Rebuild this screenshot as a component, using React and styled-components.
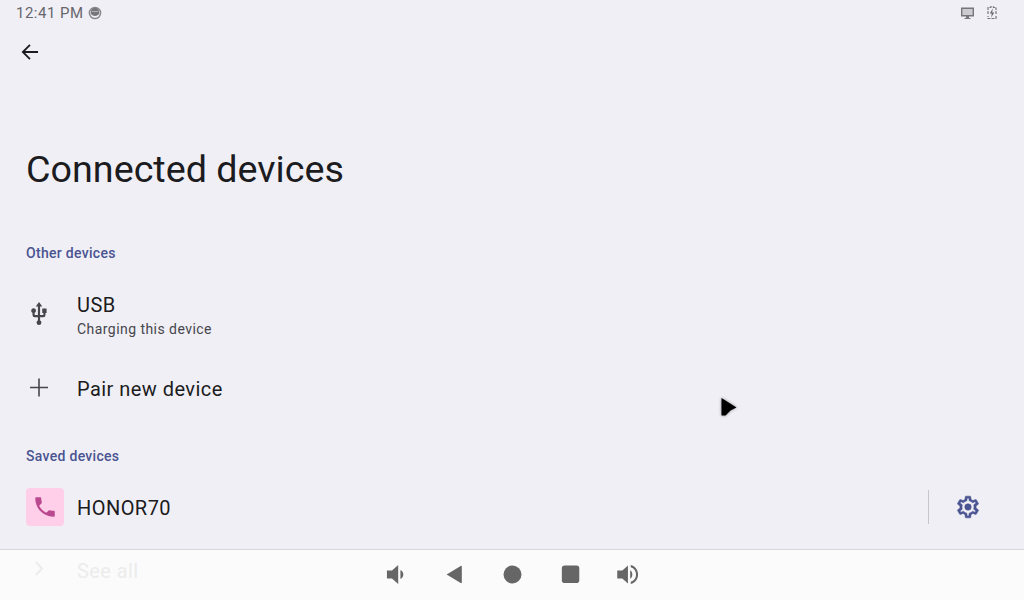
import React from "react";
import styled, { createGlobalStyle } from "styled-components";

const Global = createGlobalStyle`
  html, body { margin: 0; padding: 0; width: 1024px; height: 600px; overflow: hidden; background: #f0eff6; }
  * { box-sizing: border-box; }
`;
const Screen = styled.div`
  width: 1024px; height: 600px; position: relative; overflow: hidden;
  background: #f0eff6; font-family: Roboto, "Liberation Sans", sans-serif; color: #1b1b20;
  display: flex; flex-direction: column;
`;
const StatusBar = styled.div`
  height: 26px; flex: none; display: flex; align-items: center; justify-content: space-between;
  padding: 0 27px 0 16px; color: #66666b;
`;
const StatusGroup = styled.div`display: flex; align-items: center; gap: ${p => p.$gap || 4}px;`;
const Clock = styled.span`font-size: 15px; letter-spacing: 0.5px; line-height: 26px;`;
const BackButton = styled.div`height: 52px; flex: none; padding: 16px 0 0 20px; color: #1b1b20;`;
const Title = styled.h1`
  margin: 69px 0 0 26px; font-weight: 400; font-size: 37.7px; line-height: 44px; height: 44px; color: #1b1b20;
`;
const SectionLabel = styled.div`
  margin: ${p => p.$top}px 0 0 26px; font-size: 14px; font-weight: 500; letter-spacing: 0.3px; line-height: 20px; height: 20px; color: #4a5491;
`;
const Row = styled.div`
  display: flex; align-items: center; height: ${p => p.$h}px; margin-top: ${p => p.$top || 0}px; padding-left: 26px; position: relative;
`;
const IconSlot = styled.div`width: 51px; flex: none; display: flex; align-items: center; padding-bottom: ${p => p.$lift || 0}px; color: #46464c;`;
const RowText = styled.div`display: flex; flex-direction: column; flex: 1; padding-top: ${p => p.$drop || 0}px;`;
const RowTitle = styled.div`font-size: 20px; line-height: 26px; color: #1b1b20; letter-spacing: 0.45px;`;
const RowSub = styled.div`font-size: 14px; line-height: 20px; padding-top: 1px; color: #46464c; letter-spacing: 0.45px;`;
const PhoneTile = styled.div`
  width: 38px; height: 38px; border-radius: 4px; background: #ffcfe9; display: flex; align-items: center; justify-content: center;
`;
const Divider = styled.div`width: 1px; height: 34px; background: #c7c6ce;`;
const Gear = styled.div`width: 95px; flex: none; padding-left: 26px; display: flex; align-items: center;`;
const NavBar = styled.div`
  position: absolute; left: 0; right: 0; bottom: 0; height: 51px; background: #fbfbfb; border-top: 1px solid #d8d8da;
  display: flex; align-items: center; justify-content: center; gap: 31px; padding: 0 0 2px 1px; color: #666;
`;
const NavIcon = styled.div`width: 27px; height: 27px; display: flex; align-items: center; justify-content: center;`;
const Faded = styled.div`
  position: absolute; left: 0; bottom: 0; height: 51px; padding: 0 0 12px 34px; display: flex; align-items: center;
  color: #ececed; font-size: 20px; letter-spacing: 0.4px;
`;
const FadedLabel = styled.span`margin-left: 32px; padding-top: 4px;`;
const Pointer = styled.svg`position: absolute; left: 718px; top: 396px; filter: drop-shadow(0 0 1.5px rgba(0,0,0,.45));`;

const Nav = ({ children }) => <NavIcon><svg width="27" height="27" viewBox="0 0 24 24" fill="currentColor">{children}</svg></NavIcon>;

export default function App() {
  return (
    <Screen>
      <Global />
      <StatusBar>
        <StatusGroup>
          <Clock>12:41 PM</Clock>
          <svg width="14" height="14" viewBox="0 0 15 15">
            <circle cx="7.500" cy="7.500" r="6" fill="none" stroke="#8a8a8e" strokeWidth="1.600" />
            <path d="M3 6.500a4.500 4.500 0 0 1 9 0v1.500c-1 3.500-8 3.500-9 0z" fill="#77777b" />
            <path d="M4 5.600h7v.8H4z" fill="#c8c8cc" />
          </svg>
        </StatusGroup>
        <StatusGroup $gap={12}>
          <svg width="15" height="14" viewBox="0 0 15 14" fill="#77777b">
            <path fillRule="evenodd" d="M1 1.500h13v9H9v1.500h1.500v1h-6v-1H6v-1.500H1z M2.500 3v6h10V3z" />
            <rect x="2.500" y="3" width="10" height="6" fill="#77777b" opacity=".3" />
          </svg>
          <svg width="10" height="14" viewBox="0 0 10 14">
            <path d="M1 4V1.500h2.500V.8h3v.7H9V4M9 10v2.500H1V10M1 5v4M9 5v4" stroke="#77777b" strokeWidth="1.200" fill="none" strokeDasharray="3 1" />
            <path d="M5.800 2.500 2.800 7.500h2L4.200 11.500l3-5h-2z" fill="#66666b" />
          </svg>
        </StatusGroup>
      </StatusBar>
      <BackButton>
        <svg width="20" height="20" viewBox="0 0 20 20" fill="none" stroke="#1b1b20" strokeWidth="1.800">
          <path d="M18 10H3M10 2.800 2.800 10l7.200 7.200" />
        </svg>
      </BackButton>
      <Title>Connected devices</Title>
      <SectionLabel $top={52}>Other devices</SectionLabel>
      <Row $h={72} $top={16}>
        <IconSlot $lift={3}>
          <svg width="26" height="26" viewBox="0 0 24 24" fill="currentColor">
            <path d="M15 7v4h1v2h-3V5h2l-3-4-3 4h2v8H8v-2.070c.7-.37 1.200-1.080 1.200-1.930A2.200 2.200 0 0 0 7 6.800 2.200 2.200 0 0 0 4.800 9c0 .85.500 1.560 1.200 1.930V13a2 2 0 0 0 2 2h3v3.050c-.71.370-1.200 1.100-1.200 1.950a2.200 2.200 0 0 0 4.400 0c0-.85-.49-1.580-1.200-1.950V15h3a2 2 0 0 0 2-2v-2h1V7z" />
          </svg>
        </IconSlot>
        <RowText>
          <RowTitle>USB</RowTitle>
          <RowSub>Charging this device</RowSub>
        </RowText>
      </Row>
      <Row $h={76}>
        <IconSlot $lift={2}>
          <svg width="26" height="26" viewBox="0 0 26 26" fill="none" stroke="currentColor" strokeWidth="1.600">
            <path d="M13 3.500v18M4 12.500h18" />
          </svg>
        </IconSlot>
        <RowText><RowTitle>Pair new device</RowTitle></RowText>
      </Row>
      <SectionLabel $top={19}>Saved devices</SectionLabel>
      <Row $h={38} $top={22}>
        <IconSlot>
          <PhoneTile>
            <svg width="26" height="26" viewBox="0 0 24 24" fill="#b9488f">
              <path d="M6.620 10.790c1.440 2.830 3.760 5.140 6.590 6.590l2.200-2.200c.27-.27.670-.36 1.020-.24 1.120.37 2.330.57 3.570.57.550 0 1 .45 1 1V20c0 .55-.45 1-1 1C10.610 21 3 13.390 3 4c0-.55.450-1 1-1h3.500c.55 0 1 .45 1 1 0 1.250.2 2.450.57 3.570.11.350.03.740-.25 1.020z" />
            </svg>
          </PhoneTile>
        </IconSlot>
        <RowText $drop={2}><RowTitle>HONOR70</RowTitle></RowText>
        <Divider />
        <Gear>
          <svg width="26" height="26" viewBox="0 0 24 24" fill="#4a5491" stroke="#4a5491" strokeWidth=".5">
            <path fillRule="evenodd" d="M19.430 12.980c.04-.32.070-.64.070-.98s-.03-.66-.07-.98l2.110-1.650c.19-.15.240-.42.120-.64l-2-3.460c-.12-.22-.39-.3-.61-.22l-2.490 1c-.52-.4-1.080-.73-1.690-.98l-.38-2.650A.49.490 0 0 0 14 2h-4c-.25 0-.46.180-.49.420l-.38 2.650c-.61.250-1.170.59-1.690.98l-2.490-1c-.23-.09-.49 0-.61.220l-2 3.460c-.13.220-.07.490.12.640l2.110 1.650c-.04.320-.07.650-.07.980s.3.660.07.980l-2.110 1.650c-.19.150-.24.420-.12.640l2 3.460c.12.220.39.300.61.220l2.490-1c.52.400 1.080.730 1.690.980l.38 2.650c.3.240.24.420.49.420h4c.25 0 .46-.180.49-.42l.38-2.650c.61-.250 1.170-.590 1.690-.980l2.490 1c.23.090.49 0 .61-.220l2-3.460c.12-.22.070-.49-.12-.64zM17.500 12c0 .31-.03.620-.08.980l-.14 1.130.89.700 1.080.840-.7 1.210-1.270-.51-1.040-.420-.9.680c-.43.320-.84.560-1.250.730l-1.060.430-.16 1.130-.2 1.350h-1.400l-.19-1.350-.16-1.130-1.060-.43c-.43-.18-.83-.41-1.230-.71l-.91-.7-1.060.430-1.270.51-.7-1.210 1.080-.840.890-.7-.14-1.130A8 8 0 0 1 6.500 12c0-.2.030-.53.080-.98l.14-1.130-.89-.7-1.080-.84.7-1.210 1.270.51 1.040.42.900-.68c.43-.32.840-.56 1.250-.73l1.060-.43.160-1.130.2-1.350h1.390l.19 1.350.16 1.130 1.060.43c.43.180.83.410 1.230.71l.91.700 1.060-.43 1.270-.51.7 1.210-1.070.85-.89.700.14 1.130c.04.340.07.600.07.850z" />
            <circle cx="12" cy="12" r="3" />
          </svg>
        </Gear>
      </Row>
      <NavBar>
        <Faded>
          <svg width="11" height="16" viewBox="0 0 11 16" fill="none" stroke="#ececed" strokeWidth="2"><path d="M2 1l6 6.500L2 14" /></svg>
          <FadedLabel>See all</FadedLabel>
        </Faded>
        <Nav><path d="M3.500 8.500h4.500L13.500 3.500v17l-5.500-5H3.500z" /><path d="M15.500 8c1.600.8 2.500 2.300 2.500 4s-.9 3.200-2.500 4z" /></Nav>
        <Nav><path d="M5 12 17.500 4.400c.6-.3 1-.1 1 .6v14c0 .7-.4.900-1 .6z" /></Nav>
        <Nav><circle cx="12" cy="12" r="8" /></Nav>
        <Nav><rect x="4.300" y="4" width="15.500" height="15.500" rx="2.500" /></Nav>
        <Nav><path d="M2 8.500h4.500L11.500 4v16l-5-4.500H2z" /><path d="M13.500 8.200c1.300.8 1.900 2.200 1.900 3.800s-.6 3-1.900 3.800z" /><path d="M14 3.600c4 1 6.500 4.300 6.500 8.400s-2.500 7.400-6.500 8.400v-1.900c3-.9 4.700-3.400 4.700-6.500S17 6.400 14 5.500z" /></Nav>
      </NavBar>
      <Pointer width="20" height="24" viewBox="0 0 20 24"><path d="M3.500 2 18.500 11.500l-6 3-5 5H3.500z" fill="#000" /></Pointer>
    </Screen>
  );
}
